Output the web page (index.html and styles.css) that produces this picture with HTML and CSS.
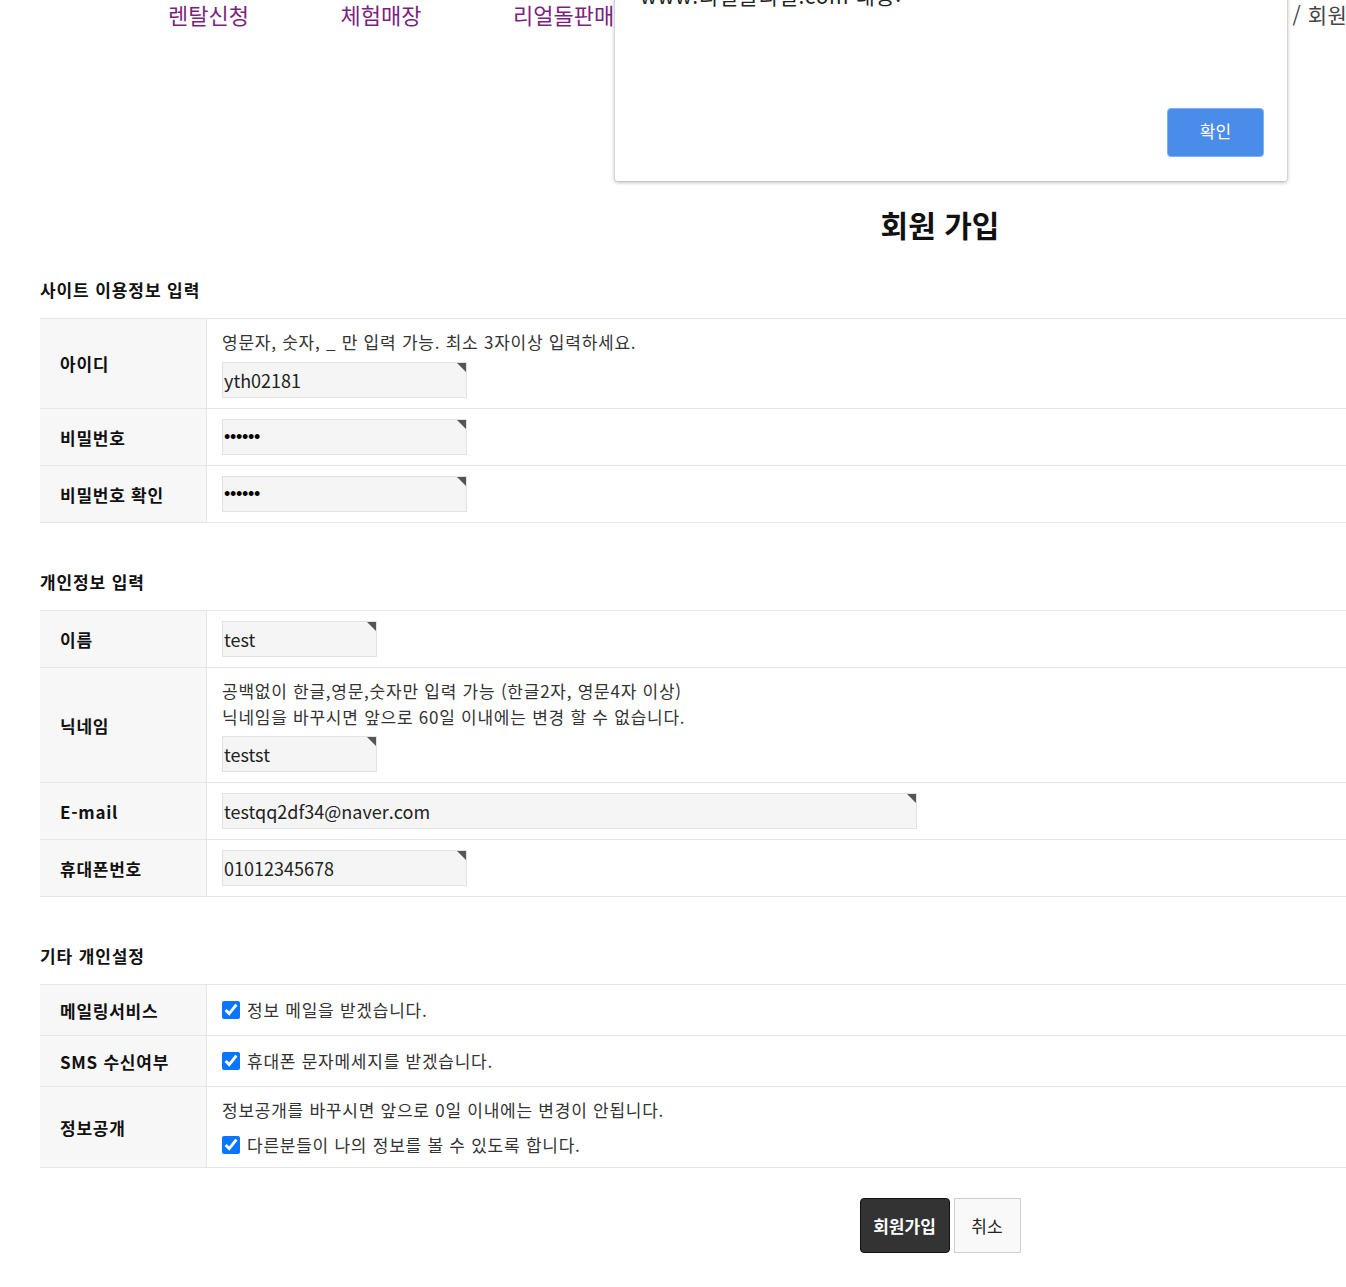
FILE: index.html
```html
<!DOCTYPE html>
<html lang="ko">
<head>
<meta charset="utf-8">
<title>회원 가입</title>
<link rel="stylesheet" href="styles.css">
</head>
<body>
<div class="page">
  <header class="header">
    <nav class="nav">
      <a class="nav-item">렌탈신청</a>
      <a class="nav-item">체험매장</a>
      <a class="nav-item">리얼돌판매</a>
    </nav>
    <div class="crumb">/ 회원가입</div>
  </header>

  <h1 class="title">회원 가입</h1>

  <h2 class="sec-title">사이트 이용정보 입력</h2>
  <div class="tbl">
    <div class="row">
      <div class="th">아이디</div>
      <div class="td">
        <p class="help help-first">영문자, 숫자, _ 만 입력 가능. 최소 3자이상 입력하세요.</p>
        <span class="req w245"><input class="inp" type="text" value="yth02181"></span>
      </div>
    </div>
    <div class="row">
      <div class="th">비밀번호</div>
      <div class="td"><span class="req w245"><input class="inp pw" type="password" value="123456"></span></div>
    </div>
    <div class="row">
      <div class="th">비밀번호 확인</div>
      <div class="td"><span class="req w245"><input class="inp pw" type="password" value="123456"></span></div>
    </div>
  </div>

  <h2 class="sec-title">개인정보 입력</h2>
  <div class="tbl">
    <div class="row">
      <div class="th">이름</div>
      <div class="td"><span class="req w155"><input class="inp" type="text" value="test"></span></div>
    </div>
    <div class="row">
      <div class="th">닉네임</div>
      <div class="td">
        <p class="help">공백없이 한글,영문,숫자만 입력 가능 (한글2자, 영문4자 이상)<br>닉네임을 바꾸시면 앞으로 60일 이내에는 변경 할 수 없습니다.</p>
        <span class="req w155"><input class="inp" type="text" value="testst"></span>
      </div>
    </div>
    <div class="row">
      <div class="th">E-mail</div>
      <div class="td"><span class="req w695"><input class="inp" type="text" value="testqq2df34@naver.com"></span></div>
    </div>
    <div class="row">
      <div class="th">휴대폰번호</div>
      <div class="td"><span class="req w245"><input class="inp" type="text" value="01012345678"></span></div>
    </div>
  </div>

  <h2 class="sec-title">기타 개인설정</h2>
  <div class="tbl">
    <div class="row">
      <div class="th">메일링서비스</div>
      <div class="td chk-cell"><label class="chk"><input type="checkbox" checked> 정보 메일을 받겠습니다.</label></div>
    </div>
    <div class="row">
      <div class="th">SMS 수신여부</div>
      <div class="td chk-cell"><label class="chk"><input type="checkbox" checked> 휴대폰 문자메세지를 받겠습니다.</label></div>
    </div>
    <div class="row">
      <div class="th">정보공개</div>
      <div class="td open-cell">
        <p class="line">정보공개를 바꾸시면 앞으로 0일 이내에는 변경이 안됩니다.</p>
        <label class="chk"><input type="checkbox" checked> 다른분들이 나의 정보를 볼 수 있도록 합니다.</label>
      </div>
    </div>
  </div>

  <div class="btns">
    <button class="btn-submit" type="button">회원가입</button>
    <button class="btn-cancel" type="button">취소</button>
  </div>

  <div class="dialog">
    <div class="dlg-text">www.리얼돌리얼.com 내용:</div>
    <div class="dlg-foot"><button class="dlg-ok" type="button">확인</button></div>
  </div>
</div>
</body>
</html>
```

FILE: styles.css
```css
html, body {
  margin: 0;
  padding: 0;
  background: #fff;
  overflow: hidden;
}
body {
  font-family: "Noto Sans CJK KR", "Noto Sans", sans-serif;
  color: #222;
  letter-spacing: 0.75px;
}
.page {
  position: relative;
  width: 1800px;
  margin-left: 40px;
  padding-bottom: 40px;
}
.header {
  display: flex;
  align-items: center;
  height: 28px;
}
.nav {
  display: flex;
  padding-left: 128px;
}
.nav-item {
  width: 172.5px;
  font-size: 22px;
  line-height: 28px;
  letter-spacing: 0;
  color: #7d1f7f;
  text-decoration: none;
  white-space: nowrap;
}
.crumb {
  margin-left: 607px;
  font-size: 21px;
  line-height: 28px;
  letter-spacing: 0.5px;
  color: #444;
  white-space: nowrap;
}
.title {
  margin: 176px 0 0;
  text-align: center;
  font-size: 30px;
  line-height: 40px;
  font-weight: 700;
  letter-spacing: 0;
  color: #111;
}
.sec-title {
  margin: 34px 0 16px;
  font-size: 17px;
  line-height: 24px;
  font-weight: 700;
  letter-spacing: 0.9px;
  color: #111;
}
.tbl + .sec-title {
  margin-top: 47px;
}
.tbl {
  border-top: 1px solid #e6e6e6;
}
.row {
  display: flex;
  border-bottom: 1px solid #e6e6e6;
}
.th {
  width: 146px;
  flex: none;
  display: flex;
  align-items: center;
  padding-left: 20px;
  background: #f7f7f7;
  border-right: 1px solid #e6e6e6;
  font-size: 17px;
  font-weight: 700;
  color: #111;
}
.td {
  flex: 1;
  padding: 10px 15px;
}
.help {
  margin: 0 0 6px;
  font-size: 17px;
  line-height: 26px;
  color: #333;
}
.help-first {
  margin-bottom: 7px;
}
.req {
  position: relative;
  display: block;
}
.req::after {
  content: "";
  position: absolute;
  top: 1px;
  right: 1px;
  width: 0;
  height: 0;
  border-top: 9px solid #555;
  border-left: 9px solid transparent;
}
.w245 { width: 245px; }
.w155 { width: 155px; }
.w695 { width: 695px; }
.inp {
  display: block;
  box-sizing: border-box;
  width: 100%;
  height: 36px;
  margin: 0;
  padding: 0 1px;
  border: 1px solid #e2e2e2;
  background: #f5f5f5;
  font-family: "Noto Sans CJK KR", "Noto Sans", sans-serif;
  font-size: 18px;
  letter-spacing: 0;
  color: #222;
  outline: none;
}
.pw {
  font-family: "Liberation Sans", Arial, sans-serif;
  font-size: 18px;
  letter-spacing: -0.3px;
  color: #000;
}
.chk-cell {
  padding: 12px 15px;
}
.chk {
  display: flex;
  align-items: center;
  font-size: 17px;
  line-height: 26px;
  color: #333;
}
.chk input {
  width: 18px;
  height: 18px;
  margin: 0 7px 0 0;
  accent-color: #0a75ff;
}
.open-cell {
  padding: 10px 15px 9px;
}
.line {
  margin: 0 0 9px;
  font-size: 17px;
  line-height: 26px;
  color: #333;
}
.btns {
  display: flex;
  justify-content: center;
  gap: 4px;
  margin-top: 30px;
}
.btn-submit {
  width: 90px;
  height: 55px;
  border: 1px solid #111;
  border-radius: 4px;
  background: #333;
  color: #fff;
  font-family: "Noto Sans CJK KR", sans-serif;
  font-size: 17px;
  font-weight: 700;
}
.btn-cancel {
  width: 67px;
  height: 55px;
  border: 1px solid #d0d0d0;
  border-radius: 0;
  background: #f9f9f9;
  color: #222;
  font-family: "Noto Sans CJK KR", sans-serif;
  font-size: 17px;
}
.dialog {
  position: absolute;
  top: -38px;
  left: 575px;
  width: 672px;
  height: 219px;
  box-sizing: border-box;
  padding: 20px 23px 24px 25px;
  display: flex;
  flex-direction: column;
  background: #fff;
  border-radius: 2px;
  box-shadow: 0 1px 4px rgba(0,0,0,0.35), 0 0 1px rgba(0,0,0,0.3);
}
.dlg-text {
  font-size: 21px;
  line-height: 26px;
  letter-spacing: 0.6px;
  color: #222;
}
.dlg-foot {
  margin-top: auto;
  display: flex;
  justify-content: flex-end;
}
.dlg-ok {
  width: 97px;
  height: 49px;
  padding: 0 0 4px;
  border: 1px solid #80b1f3;
  border-radius: 4px;
  background: #4a8ce9;
  color: #fff;
  font-family: "Noto Sans CJK KR", sans-serif;
  font-size: 17px;
}
```
